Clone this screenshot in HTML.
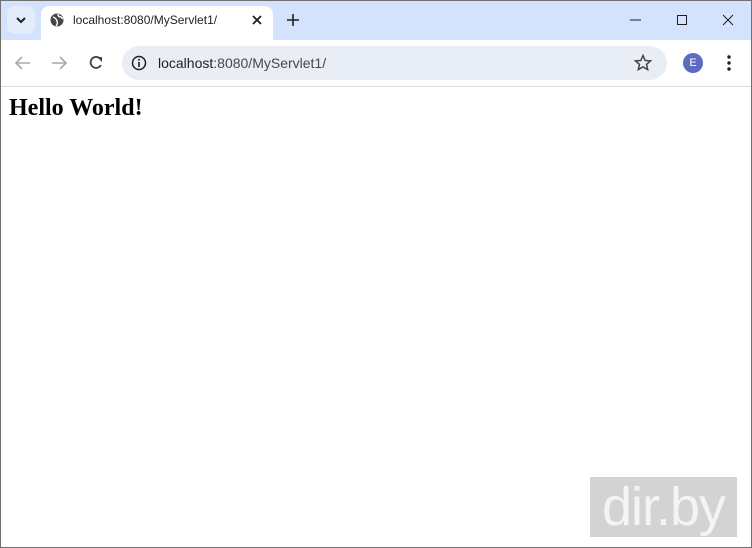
<!DOCTYPE html>
<html><head><style>
body{margin:0;width:752px;height:548px;overflow:hidden;font-family:"Liberation Sans",sans-serif;background:#fff;position:relative}
.frame{position:absolute;left:0;top:0;width:750px;height:546px;border:1px solid #707070}
.title{position:absolute;left:1px;top:1px;width:750px;height:39px;background:#d3e3fd}
.tab{position:absolute;left:41px;top:6px;width:232px;height:34px;background:#fff;border-radius:8px 8px 0 0}
.tb{position:absolute;left:1px;top:40px;width:750px;height:46px;background:#fff;border-bottom:1px solid #dadce0}
.omni{position:absolute;left:122px;top:46px;width:545px;height:34px;background:#e9eef6;border-radius:17px}
.t{position:absolute;font-size:13px;color:#1f1f1f}
svg{position:absolute}
</style></head><body>
<div class="frame"></div>
<div class="title"></div>
<div style="position:absolute;left:7px;top:6px;width:28px;height:28px;background:#e3ecfb;border-radius:8px"></div>
<svg style="left:15px;top:15px" width="12" height="10"><path d="M2 3l4 4 4-4" stroke="#1f1f1f" stroke-width="2" fill="none"/></svg>
<div class="tab"></div>
<svg style="left:50px;top:13px" width="14" height="14"><circle cx="7" cy="7" r="6.5" fill="#474747"/><path d="M3 4q3 1 4 4t-1 5M8 1q0 3 3 3l2 2" stroke="#fff" stroke-width="1.4" fill="none"/></svg>
<div class="t" style="left:73px;top:13px;font-size:12px">localhost:8080/MyServlet1/</div>
<svg style="left:251px;top:14px" width="12" height="12"><path d="M2 2l8 8M10 2l-8 8" stroke="#1f1f1f" stroke-width="1.8"/></svg>
<svg style="left:286px;top:13px" width="14" height="14"><path d="M7 1v12M1 7h12" stroke="#1f1f1f" stroke-width="1.6"/></svg>
<svg style="left:626px;top:13px" width="120" height="14"><path d="M4 7h11" stroke="#1f1f1f" stroke-width="1"/><rect x="51.5" y="2.5" width="9" height="9" stroke="#1f1f1f" fill="none"/><path d="M97 2l10 10M107 2l-10 10" stroke="#1f1f1f" stroke-width="1"/></svg>
<div class="tb"></div>
<svg style="left:14px;top:55px" width="120" height="16"><path d="M16 8H2M8 2L2 8l6 6" stroke="#a8a8a8" stroke-width="1.6" fill="none"/><path d="M38 8h14M46 2l6 6-6 6" stroke="#a8a8a8" stroke-width="1.6" fill="none"/><path d="M86 3.5A5.5 5.5 0 1 0 87 10" stroke="#444" stroke-width="1.8" fill="none"/><path d="M83 2h5v5z" fill="#444"/></svg>
<div class="omni"></div>
<svg style="left:131px;top:55px" width="16" height="16"><circle cx="8" cy="8" r="6.5" stroke="#1f1f1f" stroke-width="1.5" fill="none"/><path d="M8 7v5" stroke="#1f1f1f" stroke-width="1.6"/><circle cx="8" cy="4.8" r="1" fill="#1f1f1f"/></svg>
<div class="t" style="left:158px;top:55px;font-size:14px">localhost<span style="color:#474747">:8080/MyServlet1/</span></div>
<svg style="left:634px;top:54px" width="18" height="18"><path d="M9 1.5l2.2 5 5.3.4-4 3.5 1.2 5.2L9 12.9l-4.7 2.7 1.2-5.2-4-3.5 5.3-.4z" stroke="#444" stroke-width="1.5" fill="none"/></svg>
<div style="position:absolute;left:683px;top:53px;width:20px;height:20px;border-radius:50%;background:#5c6bc0;color:#fff;font-size:11px;text-align:center;line-height:20px">E</div>
<svg style="left:726px;top:54px" width="6" height="18"><circle cx="3" cy="3" r="1.7" fill="#1f1f1f"/><circle cx="3" cy="9" r="1.7" fill="#1f1f1f"/><circle cx="3" cy="15" r="1.7" fill="#1f1f1f"/></svg>
<div style="position:absolute;left:9px;top:95px;font-family:'Liberation Serif',serif;font-weight:bold;font-size:24px;color:#000">Hello World!</div>
<div style="position:absolute;left:590px;top:477px;width:147px;height:60px;background:#d3d3d3;color:#f4f4f4;font-size:54px;line-height:60px;text-align:center;letter-spacing:-1px">dir.by</div>
</body></html>
